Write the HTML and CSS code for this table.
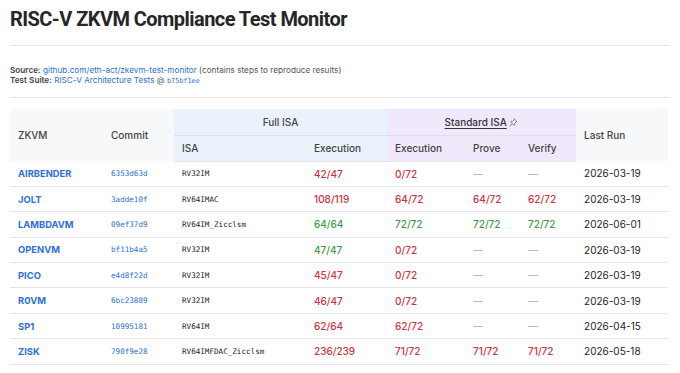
FILE: index.html
```html
<!DOCTYPE html>
<html lang="en">
<head>
  <meta charset="UTF-8" />
  <meta name="viewport" content="width=device-width, initial-scale=1.0"/>
  <title>RISC-V ZKVM Compliance Test Monitor</title>
  <link rel="stylesheet" href="styles.css">
</head>
<body>
  <h1 class="title">RISC-V ZKVM Compliance Test Monitor</h1>
  <hr class="rule">

  <div class="info">
    <div><b>Source:</b> <a href="#">github.com/eth-act/zkevm-test-monitor</a> (contains steps to reproduce results)</div>
    <div><b>Test Suite:</b> <a href="#">RISC-V Architecture Tests</a> @ <code class="hash">b75bf1ee</code></div>
  </div>
  <hr class="rule">

  <table class="results">
    <colgroup>
      <col style="width:93px"><col style="width:71px"><col style="width:132px"><col style="width:81px">
      <col style="width:78px"><col style="width:55px"><col style="width:56px"><col style="width:92px">
    </colgroup>
    <thead>
      <tr>
        <th rowspan="2" class="plain">ZKVM</th>
        <th rowspan="2" class="plain">Commit</th>
        <th colspan="2" class="full group">Full ISA</th>
        <th colspan="3" class="std group"><span class="std-link">Standard ISA</span>
          <svg class="pin" viewBox="0 0 16 16" width="9" height="9" fill="none" stroke="currentColor" stroke-width="1.2" stroke-linecap="round" stroke-linejoin="round">
            <path d="M9.5 1.8l4.7 4.7-1.6.6-2.6 2.6.2 2.6-1 1-6.4-6.4 1-1 2.6.2 2.6-2.6z"/>
            <path d="M5.2 10.8L1.8 14.2"/>
          </svg>
        </th>
        <th rowspan="2" class="plain">Last Run</th>
      </tr>
      <tr>
        <th class="full">ISA</th>
        <th class="full">Execution</th>
        <th class="std">Execution</th>
        <th class="std">Prove</th>
        <th class="std">Verify</th>
      </tr>
    </thead>
    <tbody>
      <tr>
        <td class="vm">AIRBENDER</td><td class="commit">6353d63d</td><td class="isa">RV32IM</td>
        <td class="bad">42/47</td><td class="bad">0/72</td><td class="none">—</td><td class="none">—</td><td>2026-03-19</td>
      </tr>
      <tr>
        <td class="vm">JOLT</td><td class="commit">3adde10f</td><td class="isa">RV64IMAC</td>
        <td class="bad">108/119</td><td class="bad">64/72</td><td class="bad">64/72</td><td class="bad">62/72</td><td>2026-03-19</td>
      </tr>
      <tr>
        <td class="vm">LAMBDAVM</td><td class="commit">09ef37d9</td><td class="isa">RV64IM_Zicclsm</td>
        <td class="ok">64/64</td><td class="ok">72/72</td><td class="ok">72/72</td><td class="ok">72/72</td><td>2026-06-01</td>
      </tr>
      <tr>
        <td class="vm">OPENVM</td><td class="commit">bf11b4a5</td><td class="isa">RV32IM</td>
        <td class="ok">47/47</td><td class="bad">0/72</td><td class="none">—</td><td class="none">—</td><td>2026-03-19</td>
      </tr>
      <tr>
        <td class="vm">PICO</td><td class="commit">e4d8f22d</td><td class="isa">RV32IM</td>
        <td class="bad">45/47</td><td class="bad">0/72</td><td class="none">—</td><td class="none">—</td><td>2026-03-19</td>
      </tr>
      <tr>
        <td class="vm">R0VM</td><td class="commit">6bc23889</td><td class="isa">RV32IM</td>
        <td class="bad">46/47</td><td class="bad">0/72</td><td class="none">—</td><td class="none">—</td><td>2026-03-19</td>
      </tr>
      <tr>
        <td class="vm">SP1</td><td class="commit">10995181</td><td class="isa">RV64IM</td>
        <td class="bad">62/64</td><td class="bad">62/72</td><td class="none">—</td><td class="none">—</td><td>2026-04-15</td>
      </tr>
      <tr>
        <td class="vm">ZISK</td><td class="commit">790f9e28</td><td class="isa">RV64IMFDAC_Zicclsm</td>
        <td class="bad">236/239</td><td class="bad">71/72</td><td class="bad">71/72</td><td class="bad">71/72</td><td>2026-05-18</td>
      </tr>
    </tbody>
  </table>
</body>
</html>
```

FILE: styles.css
```css
:root {
  --text: #222;
  --muted: #555;
  --link: #2f6fd6;
  --bad: #c9343f;
  --good: #3f9a45;
  --line: #e6e6e6;
  --head-bg: #f7f8f9;
  --full-bg: #eaf3fd;
  --std-bg: #efe9fb;
  --font: 'Inter', 'Liberation Sans', sans-serif;
  --mono: 'DejaVu Sans Mono', 'Liberation Mono', monospace;
}
* { box-sizing: border-box; }
body {
  margin: 0; padding: 6px 10px 0 10px;
  font-family: var(--font); color: var(--text);
  background: #fff;
}
.title {
  margin: 0; font-family: 'Roboto', var(--font);
  font-size: 20px; font-weight: 700; line-height: 27px;
  color: #262626; letter-spacing: -0.55px;
}
.rule {
  border: none; border-top: 1px solid var(--line);
  margin: 12px 0 0 0;
}
.info {
  margin-top: 19px; font-size: 8.2px; line-height: 10px; color: var(--muted);
}
.info + .rule { margin-top: 11px; }
.info b { font-weight: 600; color: #444; }
.info a { color: var(--link); text-decoration: none; }
.hash { font-family: var(--mono); font-size: 6.8px; color: var(--link); }

.results {
  margin-top: 11px; width: 658px;
  border-collapse: collapse; table-layout: fixed;
  font-size: 10px;
}
.results th {
  font-weight: 500; color: #444; text-align: left;
  padding: 0 8px; height: 26px;
}
.results th.plain { background: var(--head-bg); }
.results th.full { background: var(--full-bg); }
.results th.std { background: var(--std-bg); }
.results th.group {
  text-align: center; border-bottom: 1px solid #dde3ea;
}
.results th.std.group { border-bottom-color: #e2dcf0; }
.std-link { text-decoration: underline; text-underline-offset: 2px; color: #333; }
.pin { vertical-align: -1px; color: #555; }
.results thead tr:last-child th { border-bottom: 1px solid var(--line); }

.results td {
  padding: 0 8px; height: 25.4px;
  border-bottom: 1px solid var(--line);
  white-space: nowrap;
}
.vm { color: var(--link); font-weight: 700; font-size: 9.4px; }
.commit { font-family: var(--mono); font-size: 7.6px; color: var(--link); }
.isa { font-family: var(--mono); font-size: 7.6px; color: #222; }
.bad { color: var(--bad); font-weight: 500; }
.ok { color: var(--good); font-weight: 500; }
.none { color: #aaa; }
```
